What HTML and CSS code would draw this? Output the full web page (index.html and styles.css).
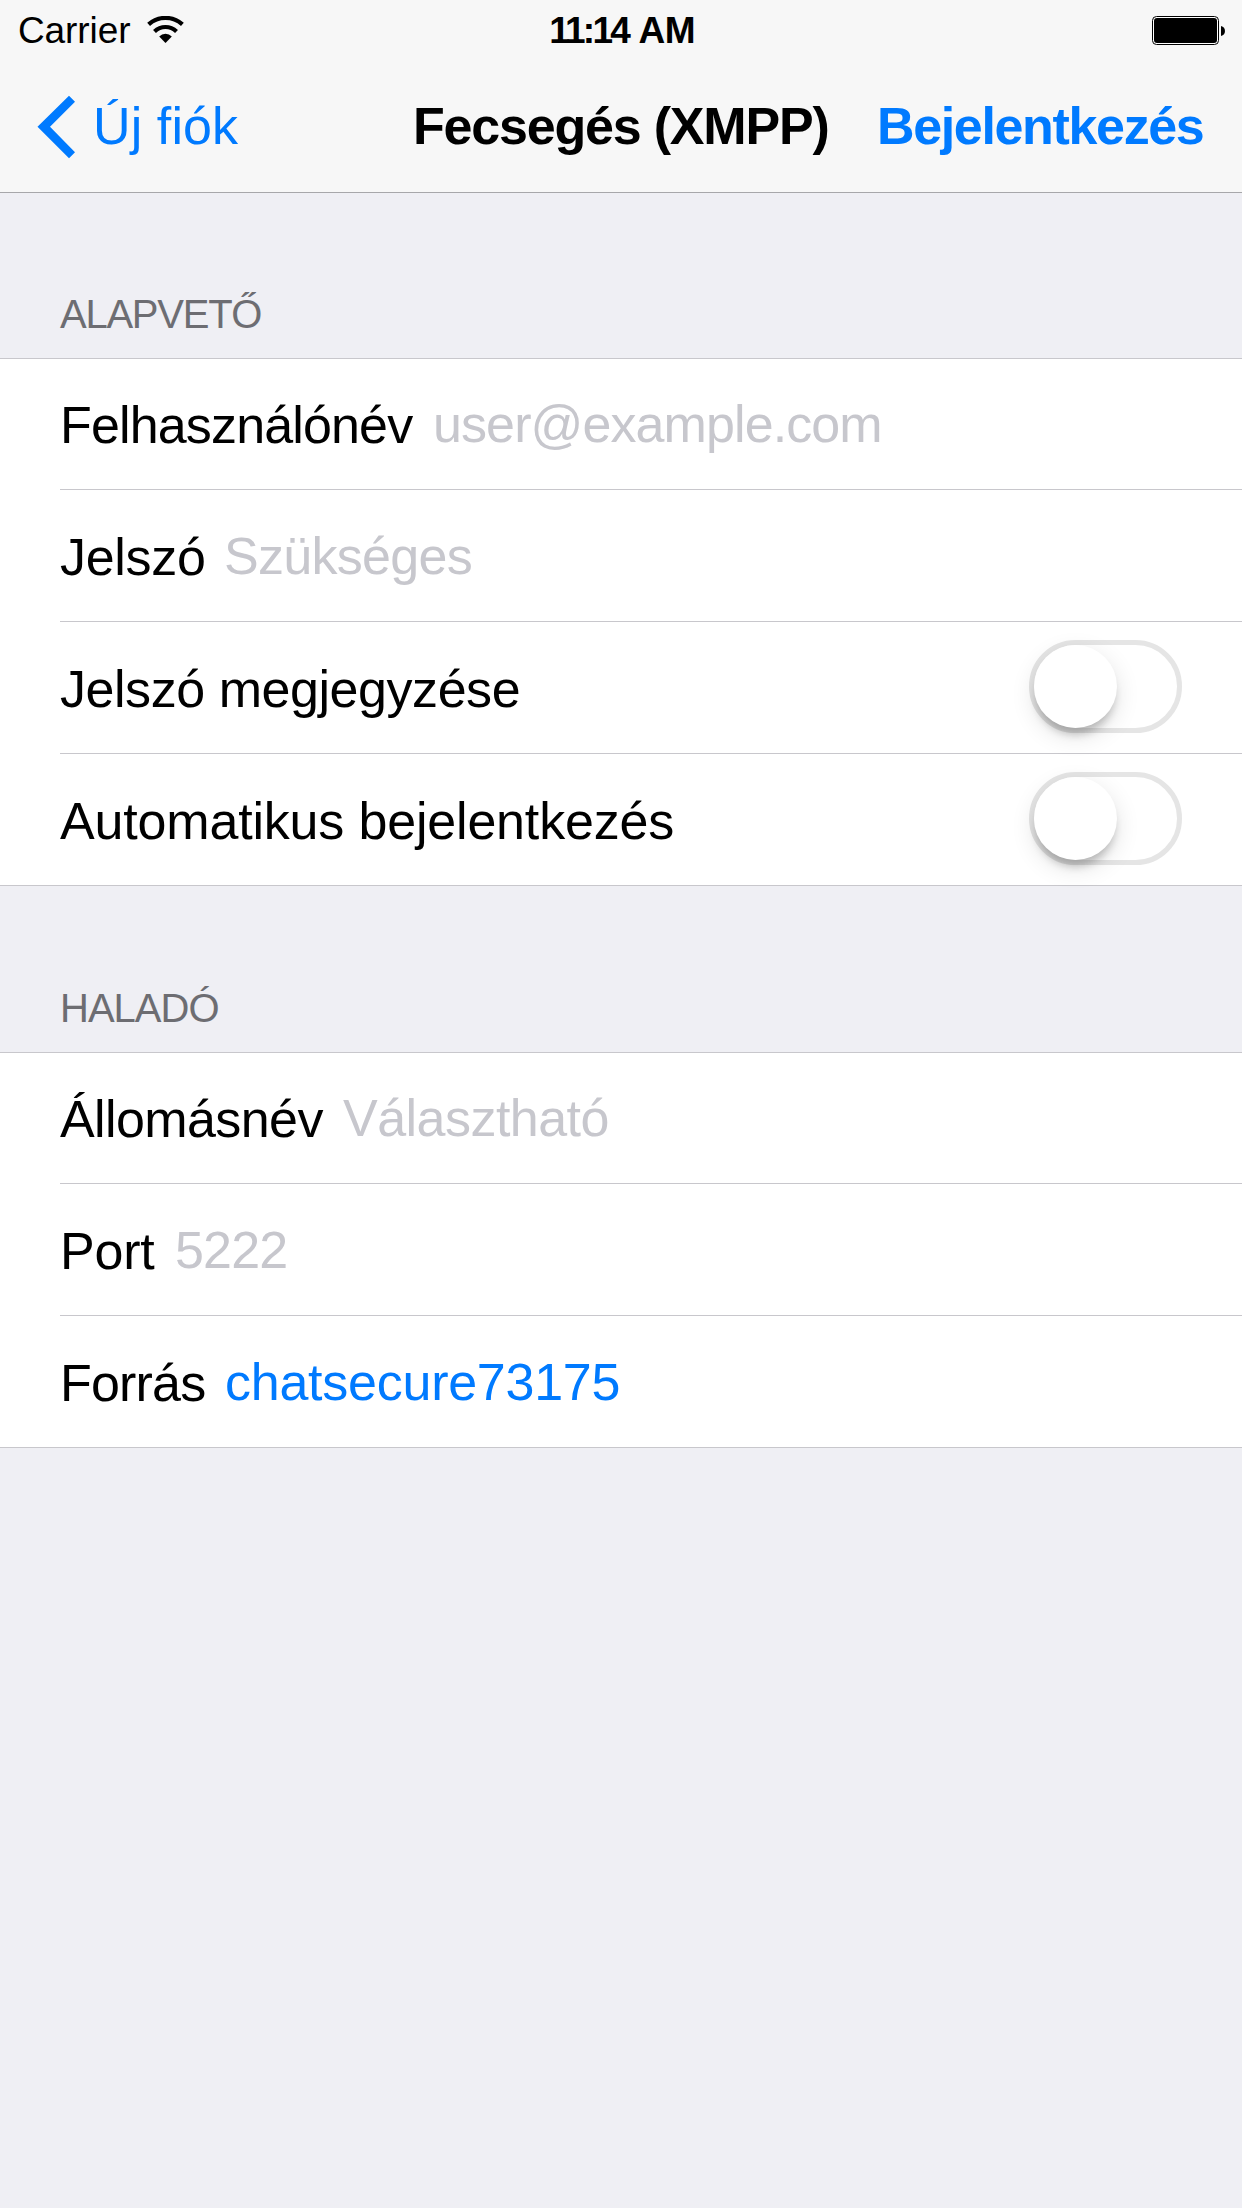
FILE: index.html
```html
<!DOCTYPE html>
<html lang="hu">
<head>
<meta charset="utf-8">
<title>Fecsegés (XMPP)</title>
<link rel="stylesheet" href="styles.css">
</head>
<body>
<header class="top">
  <div class="status">
    <div class="carrier"><span class="carrier-name">Carrier</span>
      <svg class="wifi" width="38" height="28" viewBox="0 0 38 28"><g fill="none" stroke="#000"><path d="M1.600 8.400A25.200 25.200 0 0 1 35.400 8.400" stroke-width="4.200"/><path d="M7.500 15.400A16 16 0 0 1 29.500 15.400" stroke-width="4.200"/></g><path d="M12.200 20.400A9 9 0 0 1 24.800 20.400L18.500 27Z"/></svg>
    </div>
    <span class="time"><span class="digits">11:14</span> <span class="period">AM</span></span>
    <svg class="battery" width="74" height="30" viewBox="0 0 74 30"><rect x=".5" y=".5" width="66" height="28" rx="4" fill="#fff" stroke="#000"/><rect x="2" y="2" width="63" height="25" rx="3"/><path d="M69 10c5.300 1 5.300 9 0 10z"/></svg>
  </div>
  <nav class="nav">
    <a class="back"><svg width="39" height="64" viewBox="0 0 39 64"><path d="M32 .8L38 6.800L13 31.800L38 57.200L32 63.200L.5 31.800Z" fill="#007aff"/></svg><span class="back-text">Új fiók</span></a>
    <h1 class="title">Fecsegés (XMPP)</h1>
    <a class="login">Bejelentkezés</a>
  </nav>
</header>
<main>
  <h2 class="heading basic">ALAPVETŐ</h2>
  <section class="group">
    <div class="row"><span class="label l-user">Felhasználónév</span><span class="value v-user">user@example.com</span></div>
    <div class="row"><span class="label l-pass">Jelszó</span><span class="value v-pass">Szükséges</span></div>
    <div class="row"><span class="label l-remember">Jelszó megjegyzése</span><span class="switch"><span class="knob"></span></span></div>
    <div class="row"><span class="label l-auto">Automatikus bejelentkezés</span><span class="switch"><span class="knob"></span></span></div>
  </section>
  <h2 class="heading advanced">HALADÓ</h2>
  <section class="group">
    <div class="row"><span class="label l-host">Állomásnév</span><span class="value v-host">Választható</span></div>
    <div class="row"><span class="label l-port">Port</span><span class="value v-port">5222</span></div>
    <div class="row"><span class="label l-res">Forrás</span><span class="value v-res">chatsecure73175</span></div>
  </section>
</main>
</body>
</html>
```
FILE: styles.css
```css
* { box-sizing: border-box; }
body {
  margin: 0;
  min-height: 2208px;
  background: #efeff4;
  color: #000;
  font: 52px/60px "Liberation Sans", Arial, sans-serif;
}
svg { display: block; flex: none; }
h1, h2 { margin: 0; font-size: inherit; }
span, a, h1, h2 { white-space: nowrap; }

.top { height: 193px; background: #f7f7f7; border-bottom: 1px solid #a7a7aa; }
.status { height: 60px; padding: 0 16px 0 18px; display: grid; grid-template-columns: 1fr auto 1fr; align-items: start; }
.carrier { display: flex; font-size: 37px; line-height: 42px; padding-top: 10px; }
.carrier-name { width: 129px; letter-spacing: -.1px; }
.wifi { margin-top: 6px; }
.time { padding-top: 10px; font-size: 37px; line-height: 42px; font-weight: bold; }
.digits { letter-spacing: -2.7px; }
.period { letter-spacing: -.6px; }
.battery { justify-self: end; margin-top: 16px; }
.nav { height: 132px; padding: 36px 36px 0 37px; display: grid; grid-template-columns: 376px 464px 1fr; align-items: start; }
.back { display: flex; color: #007aff; }
.back svg { margin-top: -1px; }
.back-text { margin-left: 17px; letter-spacing: .1px; }
.title { font-weight: bold; letter-spacing: -1.2px; }
.login { color: #007aff; font-weight: bold; letter-spacing: -1.35px; }

.heading { padding: 0 60px; color: #6d6d72; font-size: 40px; line-height: 46px; font-weight: normal; }
.basic { height: 165px; padding-top: 98px; letter-spacing: -1.25px; }
.advanced { height: 166px; padding-top: 99px; letter-spacing: -1px; }
.group { background: #fff; border: solid #c8c7cc; border-width: 1px 0; }
.row {
  height: 132px;
  margin-left: 60px;
  padding: 0 60px 34px 0;
  display: flex;
  align-items: flex-end;
  border-bottom: 1px solid #c8c7cc;
}
.row:first-child { height: 131px; }
.row:last-child { height: 131px; border-bottom: 0; }
.value { padding-bottom: 1px; color: #c7c7cd; }
.switch {
  width: 153px;
  height: 93px;
  margin: 0 0 -14px auto;
  border: 5px solid #e5e5e5;
  border-radius: 47px;
}
.knob {
  display: block;
  width: 83px;
  height: 83px;
  border-radius: 50%;
  background: #fff;
  box-shadow: 0 9px 9px -3px rgba(0,0,0,.22), 0 8px 24px rgba(0,0,0,.12);
}
.l-user { width: 373px; letter-spacing: -.85px; }
.v-user { letter-spacing: -.9px; }
.l-pass { width: 164px; letter-spacing: -.3px; }
.v-pass { letter-spacing: -.7px; }
.l-remember { letter-spacing: -.45px; }
.l-auto { letter-spacing: -.18px; }
.l-host { width: 283px; letter-spacing: -.6px; }
.v-host { letter-spacing: -.53px; }
.l-port { width: 115px; letter-spacing: -.2px; }
.v-port { letter-spacing: -.8px; }
.l-res { width: 165px; letter-spacing: -.8px; }
.v-res { color: #007aff; letter-spacing: -.25px; }
```
